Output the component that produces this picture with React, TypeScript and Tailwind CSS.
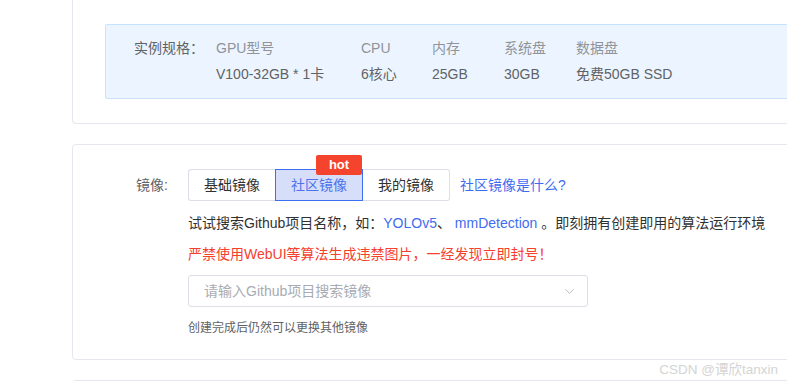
import { ChevronDown } from "lucide-react";

const specs = [
  { label: "GPU型号", value: "V100-32GB * 1卡", w: "w-[145px]" },
  { label: "CPU", value: "6核心", w: "w-[71px]" },
  { label: "内存", value: "25GB", w: "w-[72px]" },
  { label: "系统盘", value: "30GB", w: "w-[72px]" },
  { label: "数据盘", value: "免费50GB SSD", w: "w-[120px]" },
];

function App() {
  return (
    <div
      className="w-[787px] h-[381px] bg-white overflow-hidden text-[14px] text-[#606266]"
      style={{ fontFamily: '"Liberation Sans", "Noto Sans CJK SC", sans-serif' }}
    >
      {/* top card, its top edge is scrolled out of view */}
      <div className="ml-[72px] w-[760px] h-[124px] border-l border-b border-r border-[#e4e7ed] rounded-bl-[4px] pt-[24px] pl-[32px]">
        <div className="h-[75px] bg-[#ecf5ff] border border-[#c6e2ff] rounded-[2px] flex pl-[28px] pt-[13px]">
          <div className="w-[82px] leading-[20px] text-[#606266]">实例规格：</div>
          {specs.map((s) => (
            <div key={s.label} className={`${s.w} flex flex-col gap-[6px] leading-[20px]`}>
              <span className="text-[#909399]">{s.label}</span>
              <span className="text-[#606266]">{s.value}</span>
            </div>
          ))}
        </div>
      </div>

      {/* image card */}
      <div className="mt-[20px] ml-[72px] w-[760px] h-[216px] border border-[#e4e7ed] rounded-[4px] pt-[24px]">
        <div className="flex">
          <div className="w-[115px] pr-[20px] h-[32px] flex items-center justify-end text-[#606266]">镜像:</div>
          <div className="flex flex-col">
            <div className="flex items-center">
              <div className="flex h-[32px]">
                <button className="w-[87px] h-[32px] border border-r-0 border-[#dcdfe6] rounded-l-[3px] text-[#303133] bg-white">
                  基础镜像
                </button>
                <div className="relative">
                  <span className="absolute -top-[14px] left-[41px] w-[46px] h-[20px] rounded-[2px] bg-[#f5442d] text-white text-[13px] font-semibold leading-[20px] text-center">
                    hot
                  </span>
                  <button className="w-[88px] h-[32px] border border-[#3d6df0] bg-[#d6def9] text-[#4d72ee]">
                    社区镜像
                  </button>
                </div>
                <button className="w-[87px] h-[32px] border border-l-0 border-[#dcdfe6] rounded-r-[3px] text-[#303133] bg-white">
                  我的镜像
                </button>
              </div>
              <a className="ml-[10px] text-[#3f6cf0] cursor-pointer">社区镜像是什么?</a>
            </div>
            <p className="mt-[12px] leading-[20px] text-[#303133]">
              试试搜索Github项目名称，如：<span className="text-[#3f6cf0]">YOLOv5</span>、{" "}
              <span className="text-[#3f6cf0]">mmDetection</span> 。即刻拥有创建即用的算法运行环境
            </p>
            <p className="mt-[11px] leading-[20px] text-[#f5402c]">
              严禁使用WebUI等算法生成违禁图片，一经发现立即封号！
            </p>
            <div className="mt-[11px] w-[400px] h-[32px] border border-[#dcdfe6] rounded-[3px] flex items-center justify-between pl-[15px] pr-[10px]">
              <span className="text-[#a8abb2]">请输入Github项目搜索镜像</span>
              <ChevronDown size={15} strokeWidth={1.25} className="text-[#a8abb2]" />
            </div>
            <p className="mt-[12px] text-[12px] leading-[18px] text-[#606266]">创建完成后仍然可以更换其他镜像</p>
          </div>
        </div>
      </div>

      {/* next card, only its top edge shows */}
      <div className="relative mt-[20px] ml-[72px] w-[760px] h-[40px] border-t border-l border-[#e4e7ed] rounded-tl-[4px]">
        <span className="absolute right-[54px] -top-[21px] text-[13.5px] text-[#d4d4d4] leading-[20px]">CSDN @谭欣tanxin</span>
      </div>
    </div>
  );
}

export default App;
